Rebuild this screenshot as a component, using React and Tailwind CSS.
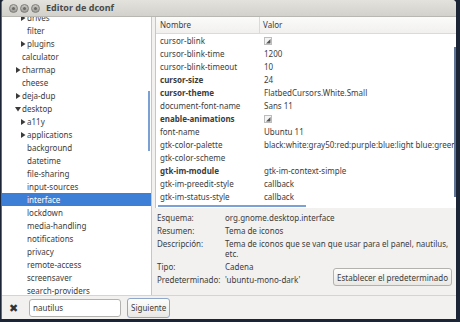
const tree = [
  { label: "drives", depth: 2, arrow: "right" },
  { label: "filter", depth: 2 },
  { label: "plugins", depth: 2, arrow: "right" },
  { label: "calculator", depth: 1 },
  { label: "charmap", depth: 1, arrow: "right" },
  { label: "cheese", depth: 1 },
  { label: "deja-dup", depth: 1, arrow: "right" },
  { label: "desktop", depth: 1, arrow: "down" },
  { label: "a11y", depth: 2, arrow: "right" },
  { label: "applications", depth: 2, arrow: "right" },
  { label: "background", depth: 2 },
  { label: "datetime", depth: 2 },
  { label: "file-sharing", depth: 2 },
  { label: "input-sources", depth: 2 },
  { label: "interface", depth: 2, selected: true },
  { label: "lockdown", depth: 2 },
  { label: "media-handling", depth: 2 },
  { label: "notifications", depth: 2 },
  { label: "privacy", depth: 2 },
  { label: "remote-access", depth: 2 },
  { label: "screensaver", depth: 2 },
  { label: "search-providers", depth: 2 },
];

const keys = [
  { name: "cursor-blink", check: true },
  { name: "cursor-blink-time", value: "1200" },
  { name: "cursor-blink-timeout", value: "10" },
  { name: "cursor-size", value: "24", bold: true },
  { name: "cursor-theme", value: "FlatbedCursors.White.Small", bold: true },
  { name: "document-font-name", value: "Sans 11" },
  { name: "enable-animations", check: true, bold: true },
  { name: "font-name", value: "Ubuntu 11" },
  { name: "gtk-color-palette", value: "black:white:gray50:red:purple:blue:light blue:green:yellow:orange:lavender:brown:goldenrod4:dodger blue:pink:light green:gray10:gray30:gray75:gray90" },
  { name: "gtk-color-scheme", value: "" },
  { name: "gtk-im-module", value: "gtk-im-context-simple", bold: true },
  { name: "gtk-im-preedit-style", value: "callback" },
  { name: "gtk-im-status-style", value: "callback" },
];

function Arrow({ dir }) {
  if (dir === "down") {
    return (
      <svg width="6" height="6" viewBox="0 0 6 6" className="shrink-0">
        <polygon points="0,1 6,1 3,5.5" fill="#3a3a3a" />
      </svg>
    );
  }
  return (
    <svg width="6" height="6" viewBox="0 0 6 6" className="shrink-0">
      <polygon points="1,0 5.5,3 1,6" fill="#3a3a3a" />
    </svg>
  );
}

function CheckIcon() {
  return (
    <svg width="8" height="8" viewBox="0 0 8 8">
      <rect x="0.5" y="0.5" width="7" height="7" fill="#f4f4f4" stroke="#bdbdbd" />
      <polygon points="6.5,2 6.5,6.5 2,6.5" fill="#555" />
    </svg>
  );
}

function TitleButton() {
  return (
    <div className="w-[9px] h-[9px] rounded-full bg-gradient-to-b from-[#c9c7c2] to-[#9d9b96] border border-[#7f7d79] flex items-center justify-center">
      <div className="w-[3px] h-[3px] rounded-full bg-[#6c6a66]" />
    </div>
  );
}

export default function App() {
  return (
    <div
      className="w-[460px] h-[322px] bg-[#1c2535] overflow-hidden text-[#3c3c3c]"
      style={{ fontFamily: '"Noto Sans", "Open Sans", sans-serif' }}
    >
      <div className="ml-[1px] w-[455px] h-[319px] flex flex-col bg-[#f2f1f0] rounded-t-[4px] overflow-hidden border-l border-[#6b6b6b]">
        {/* Title bar */}
        <div className="h-[17px] shrink-0 flex items-center bg-gradient-to-b from-[#e4e2dd] to-[#d3d1cc] border-b border-[#b9b7b2]">
          <div className="flex items-center gap-[2px] pl-[7px] w-[44px]">
            <TitleButton />
            <TitleButton />
            <TitleButton />
          </div>
          <span className="text-[9px] font-bold text-[#4a4a48]">Editor de dconf</span>
        </div>

        <div className="flex flex-1 min-h-0">
          {/* Tree */}
          <div className="w-[150px] shrink-0 bg-white overflow-hidden border-r border-[#c8c6c2] relative">
            <div className="-mt-[6px]">
              {tree.map((t) => (
                <div
                  key={t.label}
                  className={
                    "h-[13px] flex items-center text-[8px] " +
                    (t.selected ? "bg-[#3d7fd6] text-white" : "")
                  }
                  style={{ paddingLeft: t.depth === 1 ? 13 : 18 }}
                >
                  <div className="w-[6px] mr-[1px] flex items-center">
                    {t.arrow && <Arrow dir={t.arrow} />}
                  </div>
                  <span className="whitespace-nowrap">{t.label}</span>
                </div>
              ))}
            </div>
            <div className="absolute right-[1px] top-[74px] w-[2px] h-[60px] bg-[#7aa0d4]" />
          </div>

          {/* Right side */}
          <div className="flex-1 min-w-0 flex flex-col pl-[3px]">
            <div className="h-[191px] shrink-0 bg-white border-l border-[#c8c6c2] overflow-hidden relative">
              <div className="h-[17px] flex items-center text-[8px] border-b border-[#dcdad6] bg-gradient-to-b from-[#fbfbfa] to-[#f1f0ee]">
                <div className="w-[104px] pl-[4px] border-r border-[#dcdad6] h-full flex items-center">Nombre</div>
                <div className="pl-[3px]">Valor</div>
              </div>
              {keys.map((k) => (
                <div key={k.name} className="h-[13px] flex items-center text-[8px] whitespace-nowrap">
                  <div className={"w-[104px] pl-[4px] shrink-0 " + (k.bold ? "font-bold" : "")}>{k.name}</div>
                  <div className="pl-[4px]">{k.check ? <CheckIcon /> : k.value}</div>
                </div>
              ))}
              <div className="absolute left-[2px] bottom-[1px] w-[148px] h-[2px] bg-[#7aa0d4]" />
              <div className="absolute right-0 top-[30px] w-[2px] h-[150px] bg-[#5f7497]" />
            </div>

            {/* Details */}
            <div className="flex-1 pt-[3px] text-[8px] leading-[13px]">
              <div className="grid grid-cols-[68px_1fr] pl-[2px]">
                <span>Esquema:</span>
                <span>org.gnome.desktop.interface</span>
                <span>Resumen:</span>
                <span>Tema de iconos</span>
                <span>Descripción:</span>
                <span className="leading-[10px] pt-[2px] pb-[1px] whitespace-nowrap">
                  Tema de iconos que se van que usar para el panel, nautilus,
                  <br />
                  etc.
                </span>
                <span>Tipo:</span>
                <span>Cadena</span>
                <span>Predeterminado:</span>
                <div className="flex items-center justify-between pr-[4px]">
                  <span>'ubuntu-mono-dark'</span>
                  <button className="h-[18px] -mt-[5px] px-[3px] rounded-[3px] border border-[#b4b2ae] bg-gradient-to-b from-[#fdfdfc] to-[#e9e8e5] text-[8px] text-[#3c3c3c]">
                    Establecer el predeterminado
                  </button>
                </div>
              </div>
            </div>
          </div>
        </div>

        {/* Bottom bar */}
        <div className="h-[24px] shrink-0 flex items-center gap-[6px] pl-[7px] border-t border-[#d6d4d0]">
          <span className="text-[11px] text-[#333] w-[12px] leading-none">✖</span>
          <div className="w-[92px] h-[18px] ml-[2px] rounded-[3px] border border-[#b4b2ae] bg-white flex items-center pl-[3px] text-[8px]">
            nautilus
          </div>
          <button className="h-[20px] px-[3px] rounded-[3px] border border-[#8fa7c9] bg-gradient-to-b from-[#fdfdfc] to-[#e9e8e5] text-[8px] text-[#3c3c3c]">
            Siguiente
          </button>
        </div>
      </div>
    </div>
  );
}
